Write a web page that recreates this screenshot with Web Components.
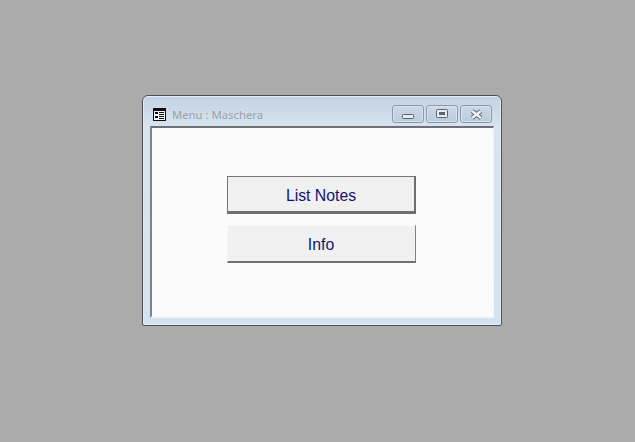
<!DOCTYPE html>
<html lang="it">

<head>
  <meta charset="UTF-8">
  <title>Menu : Maschera</title>
  <style>
    html,
    body {
      margin: 0;
      height: 100%;
      background: #ababab;
    }

    body {
      padding: 95px 0 0 142px;
      box-sizing: border-box;
      overflow: hidden;
    }
  </style>
</head>

<body>

  <access-window caption="Menu : Maschera">
    <access-button>List Notes</access-button>
    <access-button flat>Info</access-button>
  </access-window>

  <template id="access-window">
    <style>
      :host {
        display: flex;
        flex-direction: column;
        width: 360px;
        height: 231px;
        box-sizing: border-box;
        border: 1px solid #4b5158;
        border-radius: 6px 6px 2px 2px;
        background: linear-gradient(#c2d2e2 0, #d8e4ef 30px, #d3e2f0 100%);
        box-shadow: inset 0 0 0 1px #e4edf5;
        font-family: "Liberation Sans", Arial, sans-serif;
      }

      .title {
        display: flex;
        align-items: center;
        height: 30px;
        flex: none;
        padding: 6px 9px 0 10px;
        box-sizing: border-box;
      }

      .title svg.app {
        flex: none;
        margin-right: 6px;
      }

      .caption {
        flex: 1;
        font-family: "Noto Sans", "Open Sans", sans-serif;
        font-size: 11.3px;
        color: #9aa2ab;
      }

      .controls {
        display: flex;
        gap: 2px;
      }

      .client {
        flex: 1;
        margin: 0 7px 7px 7px;
        border-top: 2px solid #6a7078;
        border-left: 2px solid #7c838b;
        border-right: 1px solid #f4f7fa;
        border-bottom: 2px solid #f2f6fa;
        background: #fbfbfb;
        box-sizing: border-box;
        display: flex;
        flex-direction: column;
        gap: 11px;
        padding: 48px 0 0 75px;
      }

      .ctl {
        width: 32px;
        height: 18px;
        box-sizing: border-box;
        border: 1px solid #8799ac;
        border-radius: 3px;
        background: linear-gradient(#ccd9e6, #bccbdb);
        box-shadow: inset 0 0 0 1px #d8e2ec;
        display: flex;
        align-items: center;
        justify-content: center;
      }
    </style>
    <div class="title">
      <svg class="app" width="13" height="13" viewBox="0 0 13 13">
        <rect width="13" height="13" fill="#0b0b16" />
        <rect x="1" y="3" width="11" height="9" fill="#f4f4f4" />
        <rect x="2" y="4" width="3" height="2" fill="#0b0b16" />
        <rect x="2" y="8" width="3" height="2" fill="#0b0b16" />
        <rect x="6" y="4" width="5" height="1" fill="#0b0b16" />
        <rect x="6" y="6" width="5" height="1" fill="#0b0b16" />
        <rect x="6" y="8" width="5" height="1" fill="#0b0b16" />
        <rect x="6" y="10" width="5" height="1" fill="#0b0b16" />
      </svg>
      <span class="caption"></span>
      <div class="controls">
        <div class="ctl">
          <svg width="12" height="6" viewBox="0 0 12 6" style="margin-top:5px">
            <rect x="0.5" y="0.5" width="11" height="4" rx="1" fill="#e6ecf2" stroke="#5a636e" />
          </svg>
        </div>
        <div class="ctl">
          <svg width="12" height="10" viewBox="0 0 12 10">
            <rect x="0.5" y="0.5" width="11" height="8" rx="1" fill="#e6ecf2" stroke="#5a636e" />
            <rect x="3" y="3" width="6" height="3" fill="#5a636e" />
          </svg>
        </div>
        <div class="ctl">
          <svg width="13" height="11" viewBox="0 0 13 11">
            <path d="M2 2 L11 9 M11 2 L2 9" stroke="#5a636e" stroke-width="4.4" />
            <path d="M2 2 L11 9 M11 2 L2 9" stroke="#eef2f6" stroke-width="2.6" />
          </svg>
        </div>
      </div>
    </div>
    <div class="client"><slot></slot></div>
  </template>

  <template id="access-button">
    <style>
      :host {
        display: flex;
        align-items: center;
        justify-content: center;
        width: 189px;
        height: 38px;
        padding-top: 3px;
        box-sizing: border-box;
        background: #f0f0f0;
        color: #14146e;
        font-size: 15.8px;
        font-family: "Liberation Sans", Arial, sans-serif;
        border-top: 1px solid #767676;
        border-left: 1px solid #767676;
        border-right: 2px solid #6e6e6e;
        border-bottom: 3px solid #6e6e6e;
      }

      :host([flat]) {
        padding: 2px 1px 0 0;
        border-top: 1px solid #f8f8f8;
        border-left: 1px solid #f8f8f8;
        border-right: 1px solid #808080;
        border-bottom: 2px solid #707070;
      }
    </style>
    <slot></slot>
  </template>

  <script>
    class AccessWindow extends HTMLElement {
      constructor() {
        super();
        const template = document.querySelector("template#access-window");
        this.attachShadow({ mode: "open" }).appendChild(template.content.cloneNode(true));
      }

      connectedCallback() {
        this.shadowRoot.querySelector(".caption").textContent = this.getAttribute("caption");
      }
    }

    class AccessButton extends HTMLElement {
      constructor() {
        super();
        const template = document.querySelector("template#access-button");
        this.attachShadow({ mode: "open" }).appendChild(template.content.cloneNode(true));
      }
    }

    customElements.define("access-window", AccessWindow);
    customElements.define("access-button", AccessButton);
  </script>
</body>

</html>
